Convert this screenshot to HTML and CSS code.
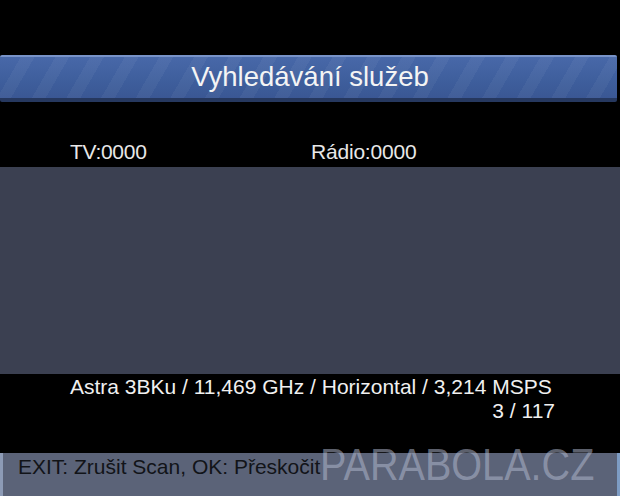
FILE: index.html
```html
<!DOCTYPE html>
<html>
<head>
<meta charset="utf-8">
<link rel="stylesheet" href="styles.css">
</head>
<body>
<div class="screen">
  <div class="top-space"></div>
  <div class="title-bar">
    <div class="title-text">Vyhledávání služeb</div>
  </div>
  <div class="counts">
    <span class="count-tv">TV:0000</span>
    <span class="count-radio">Rádio:0000</span>
  </div>
  <div class="panel"></div>
  <div class="info">
    <div class="info-line">Astra 3BKu / 11,469 GHz / Horizontal / 3,214 MSPS</div>
    <div class="info-progress">3 / 117</div>
  </div>
  <div class="spacer"></div>
  <div class="help-bar">
    <span class="help-text">EXIT: Zrušit Scan, OK: Přeskočit</span>
  </div>
  <div class="watermark">PARABOLA.CZ</div>
</div>
</body>
</html>
```

FILE: styles.css
```css
html, body {
  margin: 0;
  padding: 0;
  background: #000;
}
.screen {
  position: relative;
  width: 620px;
  height: 496px;
  overflow: hidden;
  background: #000;
  font-family: "Liberation Sans", Arial, sans-serif;
  color: #f2f2f2;
  display: flex;
  flex-direction: column;
}
.top-space {
  height: 55px;
}
.title-bar {
  width: 617px;
  height: 47px;
  box-sizing: border-box;
  border-top: 2px solid #7893c8;
  border-bottom: 4px solid #26385f;
  border-radius: 2px;
  background:
    repeating-linear-gradient(120deg, rgba(255,255,255,0) 0px, rgba(255,255,255,0) 18px, rgba(255,255,255,0.045) 18px, rgba(255,255,255,0.045) 30px),
    linear-gradient(#4868a8, #3e5e9c 60%, #3a5794);
  display: flex;
  align-items: center;
  justify-content: center;
}
.title-text {
  font-size: 27.5px;
  color: #f4f4f4;
  margin-left: 3px;
  margin-top: -2px;
}
.counts {
  height: 65px;
  box-sizing: border-box;
  padding-top: 38px;
  display: flex;
  font-size: 21px;
  line-height: 24px;
  color: #e8e8e8;
}
.count-tv {
  margin-left: 70px;
  width: 241px;
  letter-spacing: -0.3px;
}
.count-radio {
  letter-spacing: -0.2px;
}
.panel {
  height: 207px;
  background: #3b4051;
}
.info {
  padding: 1px 65px 0 70px;
  font-size: 21px;
  line-height: 24px;
  color: #f0f0f0;
}
.info-progress {
  text-align: right;
}
.spacer {
  flex: 1;
}
.help-bar {
  width: 620px;
  height: 43px;
  box-sizing: border-box;
  background: #5b6378;
  border-left: 3px solid #8d9bb6;
  border-right: 3px solid #7d9cc4;
  padding-left: 15px;
  padding-top: 2px;
}
.help-text {
  font-size: 21px;
  line-height: 24px;
  color: #121418;
}
.watermark {
  position: absolute;
  left: 320px;
  top: 441px;
  font-size: 45px;
  line-height: 48px;
  color: rgba(175, 182, 204, 0.55);
  transform: scaleX(0.88);
  transform-origin: left top;
  white-space: nowrap;
}
```
